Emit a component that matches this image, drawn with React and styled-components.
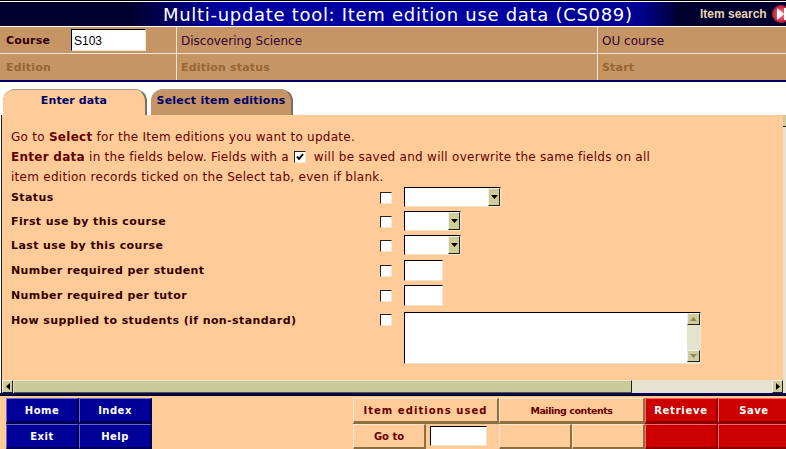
import React from 'react';
import styled, { createGlobalStyle } from 'styled-components';

const GlobalStyle = createGlobalStyle`
    html, body {
        margin: 0;
        padding: 0;
        width: 786px;
        height: 449px;
        overflow: hidden;
        background: #ffffff;
    }
    * {
        box-sizing: border-box;
    }
`;

const Page = styled.div`
    width: 786px;
    height: 449px;
    display: flex;
    flex-direction: column;
    overflow: hidden;
    font-family: "DejaVu Sans", Verdana, sans-serif;
    font-size: 11px;
    border-top: 1px solid #000000;
`;

const TitleBar = styled.div`
    height: 26px;
    flex: none;
    display: flex;
    align-items: center;
    overflow: hidden;
    border-top: 1px solid #ffffff;
    border-bottom: 1px solid #ffffff;
    background: linear-gradient(90deg, #00002e 0, #00002e 130px, #0000a0 220px, #0000a0 500px, #000090 640px, #00002e 680px, #00002e 786px);
`;

const Title = styled.div`
    flex: none;
    margin-left: 163px;
    padding-top: 1px;
    width: 520px;
    color: #ffffff;
    font-size: 18px;
    letter-spacing: 0.7px;
    white-space: nowrap;
`;

const SearchLink = styled.div`
    flex: none;
    display: flex;
    align-items: center;
    gap: 5px;
    margin-left: 17px;
    color: #e8d3b0;
    font-family: "Liberation Sans", Arial, sans-serif;
    font-weight: 700;
    font-size: 12px;
    white-space: nowrap;
`;

const InfoRow = styled.div`
    display: grid;
    grid-template-columns: 176px 421px 1fr;
    height: ${({ $h }) => $h}px;
    flex: none;
    background: #c69566;
    border-bottom: ${({ $last }) => ($last ? '2px solid #000066' : '1px solid #f2e4d4')};
`;

const InfoCell = styled.div`
    display: flex;
    align-items: center;
    padding-left: ${({ $first }) => ($first ? '6px' : '4px')};
    border-left: ${({ $first }) => ($first ? 'none' : '1px solid #f2e4d4')};
`;

const InfoLabel = styled.span`
    font-weight: 700;
    font-size: 11px;
    letter-spacing: 0.2px;
    color: ${({ $dim }) => ($dim ? '#996633' : '#330000')};
    width: ${({ $w }) => ($w ? `${$w}px` : 'auto')};
`;

const InfoText = styled.span`
    color: #330033;
    font-size: 12px;
    padding-top: 1px;
`;

const CourseInput = styled.input`
    width: 75px;
    height: 22px;
    padding: 2px 0 0 2px;
    font-family: "Liberation Sans", Arial, sans-serif;
    font-size: 12px;
    color: #000000;
    background: #ffffff;
    border-style: solid;
    border-width: 1px;
    border-color: #000000 #f0e6c8 #f0e6c8 #000000;
    outline: none;
`;

const TabStrip = styled.div`
    height: 33px;
    flex: none;
    display: flex;
    align-items: flex-end;
    gap: 4px;
    padding-left: 3px;
    background: #ffffff;
`;

const Tab = styled.div`
    width: ${({ $w }) => $w}px;
    height: 26px;
    display: flex;
    justify-content: center;
    padding-top: 4px;
    font-weight: 700;
    font-size: 11px;
    color: #000066;
    border-radius: 12px 12px 0 0;
    background: ${({ $active }) => ($active ? '#ffcc99' : '#c69566')};
    border-top: 1px solid #a89a88;
    border-right: 2px solid #77705f;
    letter-spacing: ${({ $active }) => ($active ? '0.1px' : '0.25px')};
`;

const Workspace = styled.div`
    height: 265px;
    flex: none;
    display: flex;
    background: #ffcc99;
    border-left: 1px solid #ffffff;
    box-shadow: inset 1px 0 0 #222222;
`;

const Panel = styled.div`
    flex: 1;
    padding: 12px 0 0 10px;
    color: #660000;
    font-size: 12px;
    letter-spacing: 0.27px;
`;

const Intro = styled.div`
    margin-bottom: 1px;
`;

const IntroLine = styled.div`
    height: ${({ $h }) => $h}px;
    display: flex;
    align-items: center;
    white-space: nowrap;
`;

const Strong = styled.b`
    font-weight: 700;
`;

const FieldRow = styled.div`
    display: grid;
    grid-template-columns: 368px 25px 1fr;
    height: ${({ $h }) => $h}px;
    color: #330000;
`;

const FieldLabel = styled.div`
    font-weight: 700;
    font-size: 11px;
    letter-spacing: 0.4px;
    line-height: ${({ $tight }) => ($tight ? '17px' : '21px')};
`;

const Check = styled.input.attrs({ type: 'checkbox' })`
    appearance: none;
    width: 12px;
    height: 12px;
    margin: ${({ $tight }) => ($tight ? '2px' : '5px')} 0 0 1px;
    background: #ffffff;
    border-style: solid;
    border-width: 1px;
    border-color: #222222 #f0e6c8 #f0e6c8 #222222;
`;

const InlineTick = styled.span`
    display: inline-flex;
    width: 12px;
    height: 12px;
    margin: 0 8px 0 5px;
    background: #ffffff;
    border-style: solid;
    border-width: 1px;
    border-color: #222222 #f0e6c8 #f0e6c8 #222222;
`;

const SelectBox = styled.div`
    width: ${({ $w }) => $w}px;
    height: 20px;
    display: flex;
    justify-content: flex-end;
    background: #ffffff;
    border-style: solid;
    border-width: 1px;
    border-color: #000000 #f0e6c8 #f0e6c8 #000000;
`;

const ScrollButton = styled.div`
    width: ${({ $w }) => $w || 12}px;
    height: ${({ $h }) => $h || 12}px;
    flex: none;
    display: flex;
    align-items: center;
    justify-content: center;
    background: #cdcc9a;
    border-style: solid;
    border-width: 1px;
    border-color: #f0f0de #222222 #222222 #f0f0de;
`;

const TextInput = styled.input`
    display: block;
    width: ${({ $w }) => $w}px;
    height: ${({ $h }) => $h || 21}px;
    padding: 0;
    background: #ffffff;
    outline: none;
    border-style: solid;
    border-width: 1px;
    border-color: #000000 #f0e6c8 #f0e6c8 #000000;
`;

const MemoBox = styled.div`
    width: 297px;
    height: 52px;
    display: flex;
    justify-content: flex-end;
    background: #ffffff;
    border-style: solid;
    border-width: 1px;
    border-color: #000000 #f0e6c8 #f0e6c8 #000000;
`;

const MemoScroll = styled.div`
    width: 13px;
    display: flex;
    flex-direction: column;
    justify-content: space-between;
    padding-bottom: 1px;
    background: #e4e3cf;
`;

const VerticalScroll = styled.div`
    width: 3px;
    flex: none;
    background: #e4e3cf;
    display: flex;
    flex-direction: column;
`;

const VerticalNotch = styled.div`
    height: 12px;
    flex: none;
    background: #cdcc9a;
    border-bottom: 1px solid #222222;
`;

const HorizontalScroll = styled.div`
    height: 13px;
    flex: none;
    display: flex;
    align-items: stretch;
    margin-left: 1px;
    background: #e4e3cf;
    border-left: 1px solid #222222;
`;

const ScrollThumb = styled.div`
    width: ${({ $w }) => $w}px;
    margin-left: 1px;
    background: #cbcb99;
    border-right: 1px solid #222222;
    border-bottom: 1px solid #555533;
    border-top: 1px solid #e4e3cf;
`;

const ScrollGap = styled.div`
    flex: 1;
`;

const Footer = styled.div`
    flex: 1;
    display: flex;
    gap: 201px;
    padding: 3px 0 0 6px;
    background: #ffcc99;
    border-top: 2px solid #000066;
    box-shadow: inset 0 1px 0 #000000;
`;

const NavGrid = styled.div`
    display: grid;
    grid-template-columns: 73px 73px;
    grid-auto-rows: 26px;
`;

const ActionGrid = styled.div`
    display: grid;
    grid-template-columns: repeat(6, 73px);
    grid-auto-rows: 26px;
`;

const palettes = {
    navy: { bg: '#000099', light: '#6666cc', dark: '#000055', text: '#ffffff' },
    peach: { bg: '#ffcc99', light: '#ffe6cc', dark: '#8a7040', text: '#660000' },
    red: { bg: '#cc0000', light: '#ff6666', dark: '#880000', text: '#ffffff' },
};

const Bevel = styled.div`
    grid-column: span ${({ $span }) => $span || 1};
    display: flex;
    align-items: center;
    justify-content: center;
    font-weight: 700;
    font-size: ${({ $size }) => $size || 10}px;
    letter-spacing: ${({ $track }) => ($track === undefined ? 0.5 : $track)}px;
    white-space: nowrap;
    background: ${({ $tone }) => palettes[$tone].bg};
    color: ${({ $tone }) => palettes[$tone].text};
    border-style: solid;
    border-width: 1px 2px 3px 1px;
    border-color: ${({ $tone }) => `${palettes[$tone].light} ${palettes[$tone].dark} ${palettes[$tone].dark} ${palettes[$tone].light}`};
`;

const GoToCell = styled.div`
    display: flex;
    align-items: flex-start;
    padding: 2px 0 0 4px;
`;

const fields = [
    { label: 'Status', h: 24, kind: 'select', w: 97 },
    { label: 'First use by this course', h: 24, kind: 'select', w: 57 },
    { label: 'Last use by this course', h: 25, kind: 'select', w: 57 },
    { label: 'Number required per student', h: 25, kind: 'input' },
    { label: 'Number required per tutor', h: 27, kind: 'input' },
    { label: 'How supplied to students (if non-standard)', h: 56, kind: 'memo', tight: true },
];

function Arrow({ dir, color = '#000000' }) {
    const points = {
        up: '0,4 7,4 3.5,0',
        down: '0,0 7,0 3.5,4',
        left: '4,0 4,7 0,3.5',
        right: '0,0 0,7 4,3.5',
    };
    const vertical = dir === 'up' || dir === 'down';
    return (
        <svg width={vertical ? 7 : 4} height={vertical ? 4 : 7}>
            <polygon points={points[dir]} fill={color} />
        </svg>
    );
}

function SearchIcon() {
    return (
        <svg width="18" height="18" viewBox="0 0 18 18" style={{ flex: 'none' }}>
            <defs>
                <radialGradient id="ball" cx="0.5" cy="0.5" r="0.6">
                    <stop offset="0" stopColor="#ff9aa0" />
                    <stop offset="0.7" stopColor="#c8203c" />
                    <stop offset="1" stopColor="#70203c" />
                </radialGradient>
            </defs>
            <circle cx="9" cy="9" r="9" fill="url(#ball)" />
            <polygon points="5,3 12,9 5,15" fill="#ffffff" />
            <rect x="12" y="3" width="3" height="12" fill="#ffffff" />
        </svg>
    );
}

function FieldControl({ field }) {
    if (field.kind === 'select') {
        return (
            <SelectBox $w={field.w}>
                <ScrollButton $h={18}><Arrow dir="down" /></ScrollButton>
            </SelectBox>
        );
    }
    if (field.kind === 'input') {
        return <TextInput $w={39} />;
    }
    return (
        <MemoBox>
            <MemoScroll>
                <ScrollButton $w={13}><Arrow dir="up" color="#8a8a60" /></ScrollButton>
                <ScrollButton $w={13}><Arrow dir="down" color="#8a8a60" /></ScrollButton>
            </MemoScroll>
        </MemoBox>
    );
}

export default function App() {
    return (
        <Page>
            <GlobalStyle />
            <TitleBar>
                <Title>Multi-update tool: Item edition use data (CS089)</Title>
                <SearchLink>Item search <SearchIcon /></SearchLink>
            </TitleBar>
            <InfoRow $h={27}>
                <InfoCell $first>
                    <InfoLabel $w={65}>Course</InfoLabel>
                    <CourseInput defaultValue="S103" />
                </InfoCell>
                <InfoCell><InfoText>Discovering Science</InfoText></InfoCell>
                <InfoCell><InfoText>OU course</InfoText></InfoCell>
            </InfoRow>
            <InfoRow $h={28} $last>
                <InfoCell $first><InfoLabel $dim>Edition</InfoLabel></InfoCell>
                <InfoCell><InfoLabel $dim>Edition status</InfoLabel></InfoCell>
                <InfoCell><InfoLabel $dim>Start</InfoLabel></InfoCell>
            </InfoRow>
            <TabStrip>
                <Tab $w={144} $active>Enter data</Tab>
                <Tab $w={142}>Select item editions</Tab>
            </TabStrip>
            <Workspace>
                <Panel>
                    <Intro>
                        <IntroLine $h={19}><span>Go to <Strong>Select</Strong> for the Item editions you want to update.</span></IntroLine>
                        <IntroLine $h={21}>
                            <span><Strong>Enter data</Strong> in the fields below. Fields with a</span>
                            <InlineTick>
                                <svg width="10" height="10" viewBox="0 0 10 10">
                                    <path d="M2 4.5 L4 7 L8 2" fill="none" stroke="#000000" strokeWidth="2" />
                                </svg>
                            </InlineTick>
                            <span>will be saved and will overwrite the same fields on all</span>
                        </IntroLine>
                        <IntroLine $h={19}>item edition records ticked on the Select tab, even if blank.</IntroLine>
                    </Intro>
                    {fields.map((field) => (
                        <FieldRow key={field.label} $h={field.h}>
                            <FieldLabel $tight={field.tight}>{field.label}</FieldLabel>
                            <Check $tight={field.tight} />
                            <FieldControl field={field} />
                        </FieldRow>
                    ))}
                </Panel>
                <VerticalScroll><VerticalNotch /></VerticalScroll>
            </Workspace>
            <HorizontalScroll>
                <ScrollButton $w={11} $h={13}><Arrow dir="left" /></ScrollButton>
                <ScrollThumb $w={618} />
                <ScrollGap />
                <ScrollButton $w={11} $h={13}><Arrow dir="right" /></ScrollButton>
                <VerticalScroll />
            </HorizontalScroll>
            <Footer>
                <NavGrid>
                    <Bevel $tone="navy">Home</Bevel>
                    <Bevel $tone="navy">Index</Bevel>
                    <Bevel $tone="navy">Exit</Bevel>
                    <Bevel $tone="navy">Help</Bevel>
                </NavGrid>
                <ActionGrid>
                    <Bevel $tone="peach" $span={2} $track={1.05}>Item editions used</Bevel>
                    <Bevel $tone="peach" $span={2} $size={9.5} $track={-0.45}>Mailing contents</Bevel>
                    <Bevel $tone="red" $track={0.75}>Retrieve</Bevel>
                    <Bevel $tone="red">Save</Bevel>
                    <Bevel $tone="peach" $track={0}>Go to</Bevel>
                    <GoToCell><TextInput $w={57} $h={20} /></GoToCell>
                    <Bevel $tone="peach" />
                    <Bevel $tone="peach" />
                    <Bevel $tone="red" />
                    <Bevel $tone="red" />
                </ActionGrid>
            </Footer>
        </Page>
    );
}
